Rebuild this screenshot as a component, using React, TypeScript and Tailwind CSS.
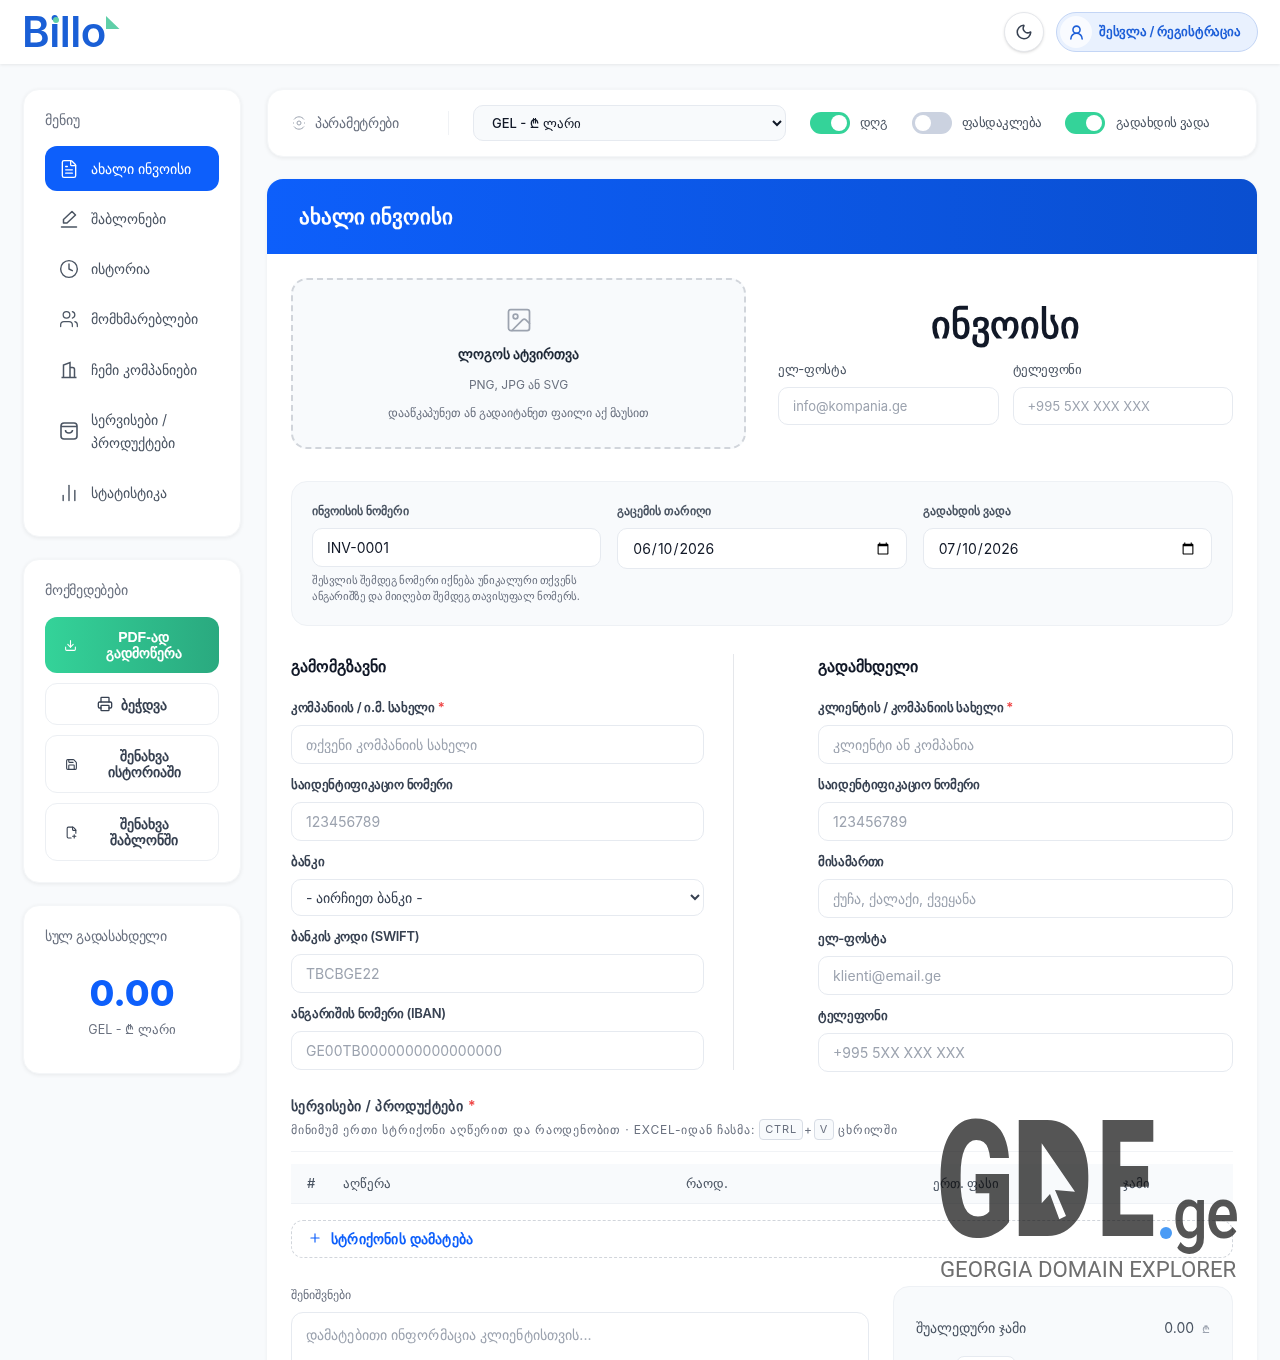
import { ChartNoAxesColumn, Clock, Download, FilePlus2, FileText, Image, Moon, Plus, Printer, Save, UserRound, Users } from "lucide-react";
import type { ReactNode } from "react";

const inputCls = "w-full rounded-[10px] border border-[#e6eaf0] bg-white px-[14px] text-[#111827] placeholder:text-[#9ca3af] focus:outline-none";
const labelCls = "mb-[10px] block text-[13px] font-semibold leading-[15px] tracking-[-0.35px] text-[#374151]";
const panelLabelCls = "mb-[9px] block text-[11.6px] font-semibold leading-[16px] text-[#4b5563]";
const cardCls = "rounded-2xl border border-[#f4f6f8] bg-white shadow-[0_1px_4px_rgba(0,0,0,0.07)]";

function SideItem({ icon, children, active, tall, extra }: { icon: ReactNode; children: ReactNode; active?: boolean; tall?: boolean; extra?: string }) {
    return (
        <div className={`flex items-center gap-[12px] rounded-xl pl-[14px] pr-3 text-[14px] leading-[23px] ${tall ? "min-h-[68px]" : "min-h-[45px]"} ${active ? "bg-[#0d5ffb] font-medium text-white" : "text-[#4b5563]"} ${extra ?? ""}`}>
            <span className="flex w-[20px] shrink-0 justify-center">{icon}</span>
            <span>{children}</span>
        </div>
    );
}

function ActionButton({ icon, children, h }: { icon: ReactNode; children: ReactNode; h: string }) {
    return (
        <div className={`flex items-center rounded-xl border border-[#eceff3] bg-white pl-[19px] pr-[19px] text-[14px] font-semibold leading-4 text-[#374151] ${h}`}>
            <span className="w-[14px]">{icon}</span>
            <span className="ml-[10px] flex-1 text-center">{children}</span>
        </div>
    );
}

function Toggle({ on }: { on?: boolean }) {
    return (
        <span className={`relative block h-[22px] w-10 rounded-full ${on ? "bg-[#34d399]" : "bg-[#cbd2e0]"}`}>
            <span className={`absolute top-[3px] h-4 w-4 rounded-full bg-white ${on ? "right-[3px]" : "left-[3px]"}`} />
        </span>
    );
}

function Field({ label, placeholder, required, mb = "mb-[13px]" }: { label: string; placeholder: string; required?: boolean; mb?: string }) {
    return (
        <div className={mb}>
            <label className={labelCls}>
                {label} {required && <span className="text-[#ef4444]">*</span>}
            </label>
            <input className={`${inputCls} h-[39px] text-[14px]`} placeholder={placeholder} />
        </div>
    );
}

export default function App() {
    return (
        <div className="relative h-[1360px] overflow-hidden bg-[#f8fafc] font-['Inter','Noto_Sans',sans-serif]">
            <header className="flex h-16 items-center justify-between bg-white pl-[22px] pr-[22px] shadow-[0_1px_3px_rgba(0,0,0,0.08)]">
                <div className="relative h-10 w-[98px]">
                    <span className="text-[42px] font-semibold leading-10 tracking-[-0.5px] text-[#1a5fd6]">Billo</span>
                    <span className="absolute left-[31px] top-[5px] h-[6px] w-[6px] rounded-full bg-[#5fcfa8]" />
                    <svg className="absolute left-[84px] top-[4px]" width="14" height="14" viewBox="0 0 14 14">
                        <path d="M0 0 13.5 13H0z" fill="#5fcfa8" />
                    </svg>
                </div>
                <div className="flex items-center gap-3">
                    <div className="flex h-10 w-10 items-center justify-center rounded-full border border-[#e5e7eb] bg-white shadow-sm">
                        <Moon size={18} className="text-[#374151]" />
                    </div>
                    <div className="flex h-10 w-[202px] items-center gap-[7px] rounded-full border border-[#c3d5f5] bg-[#e9f1fe] pl-[3px] text-[13px] font-semibold tracking-[-0.25px] text-[#1d5fd8]">
                        <span className="flex h-8 w-8 items-center justify-center rounded-full bg-white/70">
                            <UserRound size={17} strokeWidth={2.2} />
                        </span>
                        <span>შესვლა / რეგისტრაცია</span>
                    </div>
                </div>
            </header>

            <div className="flex gap-[26px] pl-[23px] pr-[23px] pt-[25px]">
                <aside className="flex w-[218px] shrink-0 flex-col gap-[22px]">
                    <div className={`${cardCls} h-[448px] px-[21px] pt-[20px]`}>
                        <div className="mb-[16px] text-[13.5px] font-medium leading-[20px] text-[#6b7280]">მენიუ</div>
                        <div className="flex flex-col gap-[5px]">
                            <SideItem active icon={<FileText size={20} strokeWidth={1.6} />}>ახალი ინვოისი</SideItem>
                            <SideItem
                                icon={
                                    <svg width="18" height="18" viewBox="0 0 18 18" fill="none" stroke="currentColor" strokeWidth="1.5" strokeLinejoin="round" strokeLinecap="round">
                                        <path d="M12 1.5 15.5 5 7 13H3.5v-3.5zM1.5 17h15" />
                                    </svg>
                                }
                            >
                                შაბლონები
                            </SideItem>
                            <SideItem icon={<Clock size={20} strokeWidth={1.7} />}>ისტორია</SideItem>
                            <SideItem icon={<Users size={20} strokeWidth={1.5} />}>მომხმარებლები</SideItem>
                            <SideItem
                                extra="mt-px"
                                icon={
                                    <svg width="18" height="18" viewBox="0 0 18 18" fill="none" stroke="currentColor" strokeWidth="1.5">
                                        <path d="M3.5 16.5V4L10 1.5v15M10 6.5h2.5a2 2 0 0 1 2 2v8M1.5 16.5h15" />
                                    </svg>
                                }
                            >
                                ჩემი კომპანიები
                            </SideItem>
                            <SideItem
                                tall
                                icon={
                                    <svg width="18" height="18" viewBox="0 0 18 18" fill="none" stroke="currentColor" strokeWidth="1.6">
                                        <rect x="1" y="1" width="16" height="16" rx="3" />
                                        <path d="M1 4.5h16M5.5 8a3.5 3 0 0 0 7 0" />
                                    </svg>
                                }
                            >
                                სერვისები / პროდუქტები
                            </SideItem>
                            <SideItem icon={<ChartNoAxesColumn size={20} strokeWidth={1.7} />}>სტატისტიკა</SideItem>
                        </div>
                    </div>

                    <div className={`${cardCls} h-[324px] px-[21px] pt-[20px]`}>
                        <div className="mb-[17px] text-[14px] font-medium leading-[20px] tracking-[-0.25px] text-[#6b7280]">მოქმედებები</div>
                        <div className="flex flex-col gap-[10px]">
                            <div className="flex h-14 items-center rounded-xl bg-gradient-to-r from-[#34d399] to-[#2aa97f] pl-[19px] pr-[19px] text-[14px] font-bold leading-4 text-white">
                                <Download size={13} />
                                <span className="ml-[10px] flex-1 text-center font-['Liberation_Sans','Noto_Sans',sans-serif]">PDF-ად გადმოწერა</span>
                            </div>
                            <div className="flex h-[42px] items-center justify-center gap-2 rounded-xl border border-[#eceff3] bg-white text-[14px] font-semibold text-[#374151]">
                                <Printer size={16} />
                                ბეჭდვა
                            </div>
                            <ActionButton h="h-[58px]" icon={<Save size={13} />}>შენახვა ისტორიაში</ActionButton>
                            <ActionButton h="h-[58px]" icon={<FilePlus2 size={13} />}>შენახვა შაბლონში</ActionButton>
                        </div>
                    </div>

                    <div className={`${cardCls} h-[169px] px-[21px] pt-[20px] text-center`}>
                        <div className="text-left text-[14px] font-medium leading-[20px] tracking-[-0.33px] text-[#6b7280]">სულ გადასახდელი</div>
                        <div className="mt-[25px] text-[36px] font-extrabold leading-[44px] text-[#0d5ffb]">0.00</div>
                        <div className="mt-[5px] text-[12.5px] leading-5 text-[#6b7280]">GEL - ₾ ლარი</div>
                    </div>
                </aside>

                <main className="min-w-0 flex-1">
                    <div className={`${cardCls} flex h-[68px] items-center pl-[24px]`}>
                        <svg width="14" height="14" viewBox="0 0 14 14" fill="none" stroke="#9ca3af" strokeWidth="1">
                            <circle cx="7" cy="7" r="2" />
                            <path d="M2 3.5a6 6 0 0 1 10 0M12 10.5a6 6 0 0 1-10 0M1 7h1M12 7h1" />
                        </svg>
                        <span className="mb-[2px] ml-[9px] w-[84px] whitespace-nowrap text-[14px] tracking-[-0.3px] text-[#6b7280]">პარამეტრები</span>
                        <span className="ml-[49px] h-6 w-px bg-[#f0f2f5]" />
                        <select className="ml-[24px] h-9 w-[313px] rounded-[10px] border border-[#e6eaf0] bg-[#f8fafc] pl-[14px] text-[13px] font-medium text-[#111827]">
                            <option>GEL - ₾ ლარი</option>
                        </select>
                        <span className="ml-[24px]"><Toggle on /></span>
                        <span className="ml-[10px] w-[28px] whitespace-nowrap text-[13px] tracking-[-0.55px] text-[#4b5563]">დღგ</span>
                        <span className="ml-[24px]"><Toggle /></span>
                        <span className="ml-[10px] w-[79px] whitespace-nowrap text-[13px] tracking-[-0.55px] text-[#4b5563]">ფასდაკლება</span>
                        <span className="ml-[24px]"><Toggle on /></span>
                        <span className="ml-[11px] whitespace-nowrap text-[13px] tracking-[-0.55px] text-[#4b5563]">გადახდის ვადა</span>
                    </div>

                    <div className="mt-[22px] h-[1200px] rounded-t-2xl bg-white shadow-[0_1px_4px_rgba(0,0,0,0.05)]">
                        <div className="flex h-[75px] items-center rounded-t-2xl bg-gradient-to-r from-[#0d5ffb] to-[#0a4fd0] pl-8">
                            <h1 className="text-[21px] font-bold text-white">ახალი ინვოისი</h1>
                        </div>

                        <div className="px-6 pt-6">
                            <div className="flex gap-8">
                                <div className="flex h-[171px] w-[455px] shrink-0 flex-col items-center rounded-2xl border-2 border-dashed border-[#d1d5db] bg-[#f8fafc] pt-[26px]">
                                    <Image size={28} strokeWidth={1.5} className="text-[#9ca3af]" />
                                    <div className="mt-[9px] text-[14px] font-semibold text-[#1f2937]">ლოგოს ატვირთვა</div>
                                    <div className="mt-[12px] text-[12px] text-[#6b7280]">PNG, JPG ან SVG</div>
                                    <div className="mt-[11px] text-[11.75px] tracking-[-0.15px] text-[#6b7280]">დააწკაპუნეთ ან გადაიტანეთ ფაილი აქ მაუსით</div>
                                </div>
                                <div className="flex-1">
                                    <div className="mt-[16px] text-center text-[38px] font-bold leading-[60px] text-[#111827]">ინვოისი</div>
                                    <div className="mt-[8px] grid grid-cols-2 gap-[14px]">
                                        <div>
                                            <label className="mb-[10px] block text-[13px] leading-[15px] tracking-[-0.35px] text-[#4b5563]">ელ-ფოსტა</label>
                                            <input className={`${inputCls} h-[38px] text-[13px]`} placeholder="info@kompania.ge" />
                                        </div>
                                        <div>
                                            <label className="mb-[10px] block text-[13px] leading-[15px] tracking-[-0.35px] text-[#4b5563]">ტელეფონი</label>
                                            <input className={`${inputCls} h-[38px] text-[13px]`} placeholder="+995 5XX XXX XXX" />
                                        </div>
                                    </div>
                                </div>
                            </div>

                            <div className="mt-[32px] grid h-[145px] grid-cols-3 gap-4 rounded-2xl border border-[#eef1f5] bg-[#f8fafc] px-5 pt-[21px]">
                                <div>
                                    <label className={panelLabelCls}>ინვოისის ნომერი</label>
                                    <input className={`${inputCls} h-[39px] text-[14px]`} defaultValue="INV-0001" />
                                    <p className="mt-[5px] text-[11px] leading-[16px] tracking-[-0.4px] text-[#6b7280]">შესვლის შემდეგ ნომერი იქნება უნიკალური თქვენს ანგარიშზე და მიიღებთ შემდეგ თავისუფალ ნომერს.</p>
                                </div>
                                <div>
                                    <label className={panelLabelCls}>გაცემის თარიღი</label>
                                    <input type="date" className={`${inputCls} h-[41px] text-[14px]`} defaultValue="2026-06-10" />
                                </div>
                                <div>
                                    <label className={panelLabelCls}>გადახდის ვადა</label>
                                    <input type="date" className={`${inputCls} h-[41px] text-[14px]`} defaultValue="2026-07-10" />
                                </div>
                            </div>

                            <div className="mt-[28px] flex">
                                <div className="w-[413px] shrink-0">
                                    <h2 className="mb-[21px] text-[16px] font-semibold leading-[25px] text-[#111827]">გამომგზავნი</h2>
                                    <Field label="კომპანიის / ი.მ. სახელი" placeholder="თქვენი კომპანიის სახელი" required />
                                    <Field label="საიდენტიფიკაციო ნომერი" placeholder="123456789" />
                                    <div className="mb-[13px]">
                                        <label className={labelCls}>ბანკი</label>
                                        <select className="h-[37px] w-full rounded-[10px] border border-[#e6eaf0] bg-white pl-[10px] text-[14px] text-[#374151]">
                                            <option>- აირჩიეთ ბანკი -</option>
                                        </select>
                                    </div>
                                    <Field label="ბანკის კოდი (SWIFT)" placeholder="TBCBGE22" />
                                    <Field label="ანგარიშის ნომერი (IBAN)" placeholder="GE00TB0000000000000000" mb="mb-0" />
                                </div>
                                <div className="ml-[29px] mr-[84px] h-[416px] w-px bg-[#e5e7eb]" />
                                <div className="flex-1">
                                    <h2 className="mb-[21px] text-[16px] font-semibold leading-[25px] text-[#111827]">გადამხდელი</h2>
                                    <Field label="კლიენტის / კომპანიის სახელი" placeholder="კლიენტი ან კომპანია" required />
                                    <Field label="საიდენტიფიკაციო ნომერი" placeholder="123456789" />
                                    <Field label="მისამართი" placeholder="ქუჩა, ქალაქი, ქვეყანა" />
                                    <Field label="ელ-ფოსტა" placeholder="klienti@email.ge" />
                                    <Field label="ტელეფონი" placeholder="+995 5XX XXX XXX" mb="mb-0" />
                                </div>
                            </div>

                            <div className="mt-[24px] border-b border-[#f1f3f6] pb-[11px]">
                                <div className="text-[14px] font-semibold leading-5 tracking-[0.4px] text-[#374151]">
                                    სერვისები / პროდუქტები <span className="ml-[1px] text-[#ef4444]">*</span>
                                </div>
                                <div className="mt-[3px] flex items-center text-[12px] tracking-[0.82px] text-[#6b7280]">
                                    მინიმუმ ერთი სტრიქონი აღწერით და რაოდენობით · EXCEL-იდან ჩასმა:
                                    <kbd className="ml-[4px] rounded border border-[#d8dde5] bg-[#f8fafc] px-[5px] font-['Inter',sans-serif] text-[11px] leading-[19px]">CTRL</kbd>
                                    <span className="mx-[1px]">+</span>
                                    <kbd className="rounded border border-[#d8dde5] bg-[#f8fafc] px-[5px] font-['Inter',sans-serif] text-[11px] leading-[19px]">V</kbd>
                                    <span className="ml-[4px]">ცხრილში</span>
                                </div>
                            </div>

                            <div className="mt-[12px] flex h-10 items-center border-b border-[#eef1f5] bg-[#f8fafc] text-[13px] font-medium text-[#4b5563]">
                                <span className="ml-4 w-9">#</span>
                                <span className="w-[343px]">აღწერა</span>
                                <span className="w-[247px]">რაოდ.</span>
                                <span className="w-[190px]">ერთ. ფასი</span>
                                <span>ჯამი</span>
                            </div>

                            <div className="mt-[16px] flex h-[38px] items-center gap-[9px] rounded-xl border border-dashed border-[#d1d5db] pb-[2px] pl-4 text-[14px] font-semibold tracking-[0.2px] text-[#0d5ffb]">
                                <Plus size={14} />
                                სტრიქონის დამატება
                            </div>

                            <div className="mt-[28px] flex gap-6">
                                <div className="w-[578px] shrink-0 pt-[1px]">
                                    <label className="block text-[12px] leading-[16px] text-[#6b7280]">შენიშვნები</label>
                                    <textarea className="mt-[9px] h-[100px] w-full rounded-xl border border-[#e6eaf0] bg-white px-[14px] py-[11px] text-[14px] tracking-[0.1px] placeholder:text-[#9ca3af]" placeholder="დამატებითი ინფორმაცია კლიენტისთვის..." />
                                </div>
                                <div className="h-[200px] flex-1 rounded-2xl border border-[#eef1f5] bg-[#f8fafc] px-[22px] pt-[30px]">
                                    <div className="flex items-center justify-between text-[14px] text-[#4b5563]">
                                        <span>შუალედური ჯამი</span>
                                        <span>0.00 <span className="ml-1 text-[11px] text-[#9ca3af]">₾</span></span>
                                    </div>
                                    <div className="ml-[40px] mt-[18px] h-9 w-[60px] rounded-lg border border-[#e6eaf0] bg-white" />
                                </div>
                            </div>
                        </div>
                    </div>
                </main>
            </div>

            {/* GDE watermark */}
            <div className="pointer-events-none absolute left-[940px] top-[1100px] h-[190px] w-[300px] font-['Roboto',sans-serif] text-[#555555] mix-blend-multiply">
                <span className="absolute left-[-4px] top-[-2px] origin-top-left scale-x-[0.7] text-[164px] font-black leading-[164px]">G</span>
                <span className="absolute left-[72px] top-[-2px] origin-top-left scale-x-[0.76] text-[164px] font-black leading-[164px]">D</span>
                <span className="absolute left-[157px] top-[-2px] origin-top-left scale-x-[0.63] text-[164px] font-black leading-[164px]">E</span>
                {/* D is solid behind the cursor */}
                <span className="absolute left-[94px] top-[36px] h-[84px] w-[42px] bg-[#555555]" />
                <svg className="absolute left-[100px] top-[42px]" width="36" height="80" viewBox="0 0 36 80">
                    <path d="M1.7 1.3 35 49.7 15 48 26 74 19.3 77.3 10 52 1.7 61.3z" fill="#ffffff" />
                </svg>
                <span className="absolute left-[220px] top-[127px] h-3 w-3 rounded-full bg-[#4a9bf5]" />
                <span className="absolute left-[233px] top-[78px] origin-left scale-x-[0.85] text-[72px] font-medium leading-[72px] tracking-[-2px]">ge</span>
                <span className="absolute left-0 top-[155px] whitespace-nowrap text-[22.2px] leading-7 text-[#6f6f6f]">GEORGIA DOMAIN EXPLORER</span>
            </div>
        </div>
    );
}
